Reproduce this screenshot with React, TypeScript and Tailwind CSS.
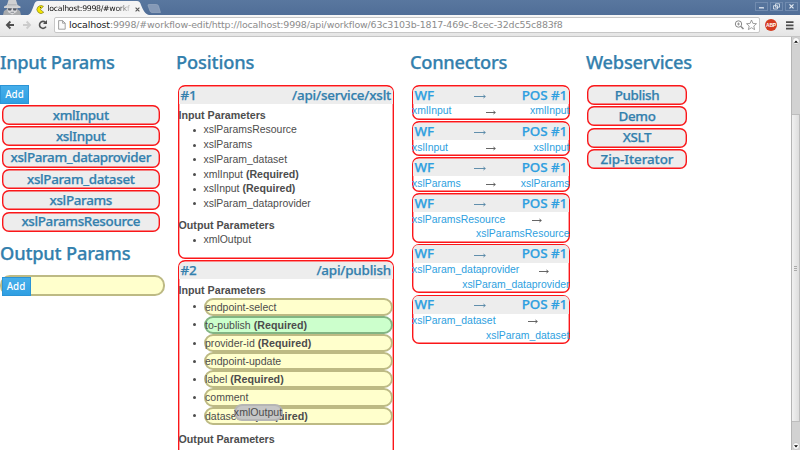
import React from "react";

const head = "font-['Noto_Sans','Open_Sans',sans-serif] font-medium text-[#3380ad] whitespace-nowrap [-webkit-text-stroke:0.25px_currentColor]";
const frame = "rounded-[7px] p-[1.5px] shadow-[inset_0_0_0_1.4px_#fb1619]";

function Title({ text, track }: { text: string; track: string }) {
  return <h2 className={`${head} h-[26px] text-[18.3px] leading-[26px] ${track}`}>{text}</h2>;
}

function Pill({ text, track = "tracking-[-0.33px]" }: { text: string; track?: string }) {
  return (
    <div className={`${head} ${frame} mb-[1.35px] flex h-[20px] items-center justify-center bg-[#ededed] text-[13.4px] leading-[17px] ${track}`}>
      <span>{text}</span>
    </div>
  );
}

function AddButton() {
  return (
    <button className="block h-[19px] w-[29px] border border-[#2b94d6] bg-gradient-to-b from-[#45aeea] to-[#2f9fe2] text-center font-['Noto_Sans',sans-serif] text-[9.8px] font-medium leading-[17px] text-white">
      Add
    </button>
  );
}

function Label({ text, cls = "" }: { text: string; cls?: string }) {
  return <div className={`h-[14.6px] whitespace-nowrap text-[10.7px] font-bold leading-[14.6px] ${cls}`}>{text}</div>;
}

function Bullet() {
  return <span className="mr-[7.5px] ml-[14px] size-[3px] shrink-0 rounded-full bg-[#4d4d4d]" />;
}

function Item({ text, required }: { text: string; required?: boolean }) {
  return (
    <li className="flex h-[14.65px] items-center whitespace-nowrap text-[10.45px] leading-[14.65px]">
      <Bullet />
      <span>{text}{required && <b className="text-[10.6px]"> (Required)</b>}</span>
    </li>
  );
}

function Drop({ text, required, green }: { text: string; required?: boolean; green?: boolean }) {
  return (
    <li className="flex h-[18.15px] items-center whitespace-nowrap text-[10.55px]">
      <Bullet />
      <span className={`flex h-[18.15px] flex-1 items-center rounded-[9px] border-2 pl-[0.5px] ${green ? "border-[#82b583] bg-[#ccffcc]" : "border-[#bdba84] bg-[#ffffcc]"}`}>
        <span className="-ml-px leading-[14px]">{text}{required && <b className="text-[10.7px]"> (Required)</b>}</span>
      </span>
    </li>
  );
}

function PosHead({ n, path }: { n: string; path: string }) {
  return (
    <div className={`${head} flex h-[17.5px] justify-between rounded-t-[5px] bg-[#ededed] px-[1.5px] text-[13.4px] leading-[17.5px] tracking-[-0.2px]`}>
      <span>{n}</span>
      <span>{path}</span>
    </div>
  );
}

function Arrow({ w, color }: { w: number; color: string }) {
  return (
    <svg width={w} height="6" viewBox={`0 0 ${w} 6`} fill="none" stroke={color} strokeWidth="0.9">
      <path d={`M0 3.5H${w - 1}`} />
      <path d={`M${w - 2.6} 2L${w - 0.6} 3.5L${w - 2.6} 5`} />
    </svg>
  );
}

function Connector({ name, gap }: { name: string; gap?: string }) {
  return (
    <div className={`${frame} mb-[1.3px] text-[#2e9fe0] ${gap ? "h-[49.4px]" : "h-[34.8px]"}`}>
      <div className="flex h-[17.5px] items-center rounded-t-[5px] bg-[#ededed] px-[1.5px] font-['Noto_Sans',sans-serif] text-[13.4px] font-medium leading-[17.5px] [-webkit-text-stroke:0.25px_currentColor]">
        <span className="w-[59px]">WF</span>
        <span className="pt-[1px]"><Arrow w={12} color="#5185a5" /></span>
        <span className="ml-auto whitespace-nowrap tracking-[-0.1px]">POS #1</span>
      </div>
      {gap ? (
        <div className="-mx-px pt-[0.5px] text-[10.45px] leading-[14.6px]">
          <div className="flex h-[14.6px] items-center"><span>{name}</span><span className={gap}><Arrow w={10} color="#555555" /></span></div>
          <div className="text-right">{name}</div>
        </div>
      ) : (
        <div className="-mx-px flex h-[15px] items-center pt-[0.5px] text-[10.45px] leading-[14.6px]">
          <span className="w-[73.5px]">{name}</span>
          <span className="pt-[1px]"><Arrow w={10} color="#555555" /></span>
          <span className="ml-auto">{name}</span>
        </div>
      )}
    </div>
  );
}

function WindowButton({ children }: { children: React.ReactNode }) {
  return (
    <span className="flex h-[9px] w-[13px] items-center justify-center border border-[#718baf]">
      <svg width="9" height="7" viewBox="0 0 9 7" fill="none" stroke="#e5ebf3" strokeWidth="1">{children}</svg>
    </span>
  );
}

function Browser() {
  return (
    <header className="h-[37px] shrink-0 font-['DejaVu_Sans',sans-serif]">
      <div className="flex h-[15px] items-end bg-gradient-to-b from-[#59779f] to-[#506e97]">
        <svg className="h-[15px] w-[28px] shrink-0" viewBox="0 0 28 15">
          <path d="M3 15L4 11L7 9L17 9L20 11L21 15Z" fill="#a9abad" />
          <path d="M7 5L8.5 0H16L17.5 5L20.5 6.5V8H4V6.5Z" fill="#cfd0d2" />
          <path d="M7 7.5H17.5L16.5 12L12.2 14.5L8 12Z" fill="#dcdcde" />
          <path d="M7.5 8.2H12L11 10.4H8.5ZM12.6 8.2H17L16 10.4H13.5Z" fill="#555b65" />
          <path d="M8 4.8H16.5" stroke="#a1a5ab" strokeWidth=".8" />
          <path d="M10.5 12.3H14" stroke="#777d86" strokeWidth=".8" />
        </svg>
        <div className="relative h-[14px] w-[122px] shrink-0">
          <svg className="absolute inset-0" width="122" height="14" viewBox="0 0 122 14">
            <path d="M0 14C3 13 4 9 6 4Q7 0 10 0H109Q112 0 113 4C115 9 117 13 121 14Z" fill="#f4f4f4" />
          </svg>
          <div className="relative flex h-[14px] items-center pt-[2px] pl-[8px]">
            <svg className="shrink-0" width="9" height="9" viewBox="0 0 9 9"><path d="M7.5 1.4A4 4 0 1 0 7.8 7.3L4.3 4.5Z" fill="#f3e600" stroke="#77722a" strokeWidth=".6" /><circle cx="4.5" cy="2.3" r=".6" fill="#333" /></svg>
            <span className="ml-[2.5px] w-[83px] whitespace-nowrap bg-gradient-to-r from-[#111] from-80% to-[#d8d8d8] bg-clip-text text-[7.8px] leading-[12px] tracking-[-0.3px] text-transparent">localhost:9998/#workf</span>
            <svg className="ml-[4px] shrink-0" width="5" height="5" viewBox="0 0 5 5" stroke="#555" strokeWidth="1.1"><path d="M.6.6L4.4 4.4M4.4.6L.6 4.4" /></svg>
          </div>
        </div>
        <svg className="mb-[2px] ml-[-3px] h-[9px] w-[15px]" viewBox="0 0 15 9"><path d="M2 .5H9.5Q11 .5 11.5 2L13.5 8.5H5Q3.5 8.5 3 7L1 1.5Q.8.5 2 .5Z" fill="#8599b7" stroke="#a0afc5" strokeWidth=".6" /></svg>
        <div className="mr-[2px] mb-[4px] ml-auto flex gap-[2px]">
          <WindowButton><path d="M2 4.8H7" strokeWidth="1.3" /></WindowButton>
          <WindowButton><path d="M3.5.8H7.5V4.2H3.5ZM1.5 2.7H5.5V6H1.5Z" strokeWidth=".8" /></WindowButton>
          <WindowButton><path d="M2.5 1.3L6.5 5.3M6.5 1.3L2.5 5.3" strokeWidth="1.2" /></WindowButton>
        </div>
      </div>
      <div className="flex h-[22px] items-center border-b border-[#c5c5c5] bg-gradient-to-b from-[#f7f7f7] to-[#e5e5e5] pb-px">
        <svg className="w-[54px] shrink-0" height="20" viewBox="0 0 54 20" fill="none" strokeWidth="1.8">
          <path d="M14 10H7M10.4 6.5L6.9 10L10.4 13.5" stroke="#505050" />
          <path d="M23 10H30M26.6 6.5L30.1 10L26.6 13.5" stroke="#cccccc" />
          <path d="M45.4 7.3A3.5 3.5 0 1 0 46 11.7" stroke="#505050" strokeWidth="1.6" />
          <path d="M47 5V9H43Z" fill="#505050" />
        </svg>
        <div className="flex h-[16px] w-[706px] items-center rounded-[2px] border border-[#c7c7c7] bg-white pl-[3px]">
          <svg className="shrink-0" width="8" height="10" viewBox="0 0 8 10" fill="#fafafa" stroke="#8a8a8a" strokeWidth=".8"><path d="M.6.6H4.6L7.2 3.2V9.2H.6ZM4.6.6V3.2H7.2" /></svg>
          <span className="ml-[3px] whitespace-nowrap text-[9.45px] leading-[14px] tracking-[-0.165px] text-[#8c8c8c]"><span className="text-[#222]">localhost</span>:9998/#workflow-edit/http://localhost:9998/api/workflow/63c3103b-1817-469c-8cec-32dc55c883f8</span>
          <svg className="mr-[1px] ml-auto shrink-0" width="24" height="12" viewBox="0 0 24 12" fill="none" stroke="#888" strokeWidth="1">
            <circle cx="4.5" cy="5" r="3.2" /><path d="M3 5H6M4.5 3.5V6.5" strokeWidth=".8" /><path d="M7 7.5L9.5 10" strokeWidth="1.5" />
            <path d="M17.5 1L18.9 4.4L22.5 4.7L19.8 7L20.6 10.6L17.5 8.7L14.4 10.6L15.2 7L12.5 4.7L16.1 4.4Z" strokeWidth=".8" />
          </svg>
        </div>
        <span className="ml-[5px] flex size-[12px] items-center justify-center rounded-full bg-[#d53b20] font-['Liberation_Sans',sans-serif] text-[5px] font-bold leading-none tracking-[-0.2px] text-white">ABP</span>
        <svg className="ml-[9px]" width="8" height="9" viewBox="0 0 8 9" stroke="#4d4d4d" strokeWidth="1.7"><path d="M0 1.2H7.5M0 4.4H7.5M0 7.6H7.5" /></svg>
      </div>
    </header>
  );
}

function Scrollbar() {
  return (
    <aside className="flex w-[9px] shrink-0 flex-col border-l border-[#b5b5b5] bg-[#d2d2d2]">
      <div className="flex h-[8px] items-center justify-center rounded-sm border border-[#c5c5c5] bg-[#fbfbfb]"><svg width="4" height="3" viewBox="0 0 4 3"><path d="M0 2.8L2 .4L4 2.8Z" /></svg></div>
      <div className="mt-[69px] flex h-[308px] items-center justify-center border-y border-r border-[#bdbdbd] bg-gradient-to-r from-[#f1f1f1] to-[#dedede]">
        <div className="flex flex-col gap-px"><i className="h-px w-[3px] bg-[#aaa]" /><i className="h-px w-[3px] bg-[#aaa]" /><i className="h-px w-[3px] bg-[#aaa]" /></div>
      </div>
      <div className="mt-auto flex h-[8px] items-center justify-center rounded-sm border border-[#c5c5c5] bg-[#fbfbfb]"><svg width="4" height="3" viewBox="0 0 4 3"><path d="M0 .2L2 2.6L4 .2Z" /></svg></div>
    </aside>
  );
}

export default function App() {
  return (
    <div className="flex h-[450px] w-[800px] flex-col overflow-hidden bg-white font-['Liberation_Sans',Arial,sans-serif] text-[#4d4d4d]">
      <Browser />
      <div className="flex h-[413px]">
        <main className="flex flex-1 items-start overflow-hidden pt-[12px]">
          <section className="w-[176px] shrink-0">
            <Title text="Input Params" track="tracking-[-0.3px]" />
            <div className="mt-[10px]"><AddButton /></div>
            <div className="mt-[1px] mr-[16px] ml-[1.5px]">
              <Pill text="xmlInput" />
              <Pill text="xslInput" />
              <Pill text="xslParam_dataprovider" />
              <Pill text="xslParam_dataset" />
              <Pill text="xslParams" />
              <Pill text="xslParamsResource" />
            </div>
            <div className="mt-[8px]"><Title text="Output Params" track="tracking-[-0.2px]" /></div>
            <div className="mt-[9.4px] ml-[-0.5px] h-[21px] w-[165px] rounded-[10px] border-2 border-[#bdba84] bg-[#ffffcc]"><AddButton /></div>
          </section>
          <section className="w-[234px] shrink-0">
            <Title text="Positions" track="tracking-[-0.15px]" />
            <div className="mt-[10px] ml-[1.5px] w-[216.5px]">
              <article className={`${frame} h-[174.4px]`}>
                <PosHead n="#1" path="/api/service/xslt" />
                <Label text="Input Parameters" cls="mt-[4px] -ml-[0.5px]" />
                <ul className="pt-[0.8px]">
                  <Item text="xslParamsResource" />
                  <Item text="xslParams" />
                  <Item text="xslParam_dataset" />
                  <Item text="xmlInput" required />
                  <Item text="xslInput" required />
                  <Item text="xslParam_dataprovider" />
                </ul>
                <Label text="Output Parameters" cls="mt-[6.6px] -ml-[0.5px]" />
                <ul className="pt-[0.8px]"><Item text="xmlOutput" /></ul>
              </article>
              <article className={`${frame} relative mt-[1.1px] h-[230px]`}>
                <PosHead n="#2" path="/api/publish" />
                <Label text="Input Parameters" cls="mt-[4px] -ml-[0.5px]" />
                <ul className="-mt-[0.4px]">
                  <Drop text="endpoint-select" />
                  <Drop text="to-publish" required green />
                  <Drop text="provider-id" required />
                  <Drop text="endpoint-update" />
                  <Drop text="label" required />
                  <Drop text="comment" />
                  <Drop text="dataset-id" required />
                </ul>
                <Label text="Output Parameters" cls="mt-[7px] -ml-[0.5px]" />
                <span className="absolute top-[144px] left-[56px] flex h-[17px] w-[49px] items-center justify-center rounded-[8px] border-2 border-[#b5b5b5] bg-[#c6c6c6] text-[10.6px]">xmlOutput</span>
              </article>
            </div>
          </section>
          <section className="w-[176px] shrink-0">
            <Title text="Connectors" track="tracking-[-0.3px]" />
            <div className="mt-[10px] ml-[1.5px] w-[158.5px]">
              <Connector name="xmlInput" />
              <Connector name="xslInput" />
              <Connector name="xslParams" />
              <Connector name="xslParamsResource" gap="ml-[27px]" />
              <Connector name="xslParam_dataprovider" gap="ml-[20px]" />
              <Connector name="xslParam_dataset" gap="ml-[32px]" />
            </div>
          </section>
          <section className="shrink-0">
            <Title text="Webservices" track="tracking-[-0.25px]" />
            <div className="mt-[10px] ml-[1px] w-[100px]">
              <Pill text="Publish" />
              <Pill text="Demo" />
              <Pill text="XSLT" />
              <Pill text="Zip-Iterator" track="tracking-[-0.05px]" />
            </div>
          </section>
        </main>
        <Scrollbar />
      </div>
    </div>
  );
}
